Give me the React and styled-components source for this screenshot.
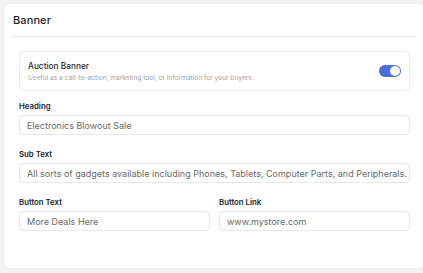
import React from 'react'
import styled, { createGlobalStyle } from 'styled-components'

const GlobalStyle = createGlobalStyle`
    html, body {
        margin: 0;
        padding: 0;
        background: #f3f3f3;
        overflow: hidden;
    }
    body {
        font-family: Inter, "Noto Sans", sans-serif;
        color: #222;
    }
`

const Page = styled.div`
    padding: 4px 0 0 4px;
    width: 423px;
    height: 273px;
    box-sizing: border-box;
`

const Card = styled.section`
    width: 421px;
    height: 264px;
    box-sizing: border-box;
    background: #fff;
    border-radius: 6px;
    box-shadow: 0 0 2px rgba(0, 0, 0, 0.04);
`

const CardHeader = styled.header`
    margin: 0 9px;
    height: 32px;
    display: flex;
    align-items: center;
    border-bottom: 1px solid #e8e8e8;
`

const Title = styled.h2`
    margin: 0;
    font-size: 11px;
    font-weight: 500;
    letter-spacing: 0.1px;
    color: #1e1e1e;
`

const Body = styled.div`
    padding: 14px 15px 0 15px;
    display: flex;
    flex-direction: column;
`

const ToggleBox = styled.div`
    height: 40px;
    box-sizing: border-box;
    border: 1px solid #ececec;
    border-radius: 5px;
    display: flex;
    align-items: center;
    justify-content: space-between;
    padding: 0 8px 0 8px;
`

const ToggleText = styled.div`
    display: flex;
    flex-direction: column;
    gap: 3px;
`

const ToggleTitle = styled.span`
    font-size: 8.3px;
    font-weight: 500;
    color: #2a2a2a;
`

const ToggleHint = styled.span`
    font-size: 6.6px;
    color: #a4a4a4;
`

const Switch = styled.div`
    width: 22px;
    height: 12px;
    border-radius: 6px;
    background: ${props => (props.on ? '#4c6ddc' : '#ccc')};
    display: flex;
    align-items: center;
    justify-content: ${props => (props.on ? 'flex-end' : 'flex-start')};
    padding: 0 1px;
    box-sizing: border-box;

    &::after {
        content: '';
        width: 10px;
        height: 10px;
        border-radius: 50%;
        background: #fff;
    }
`

const Row = styled.div`
    display: grid;
    grid-template-columns: 1fr 1fr;
    gap: 9px;
`

const Field = styled.div`
    display: flex;
    flex-direction: column;
    gap: 3px;
    margin-top: ${props => props.top}px;
`

const Label = styled.label`
    font-size: 7.8px;
    font-weight: 600;
    color: #252525;
    height: 12px;
    line-height: 12px;
`

const Input = styled.div`
    height: 20px;
    box-sizing: border-box;
    border: 1px solid #e9e9e9;
    border-radius: 4px;
    padding: 0 7px;
    display: flex;
    align-items: center;
    font-size: 9px;
    color: #6a6a6a;
    white-space: nowrap;
    overflow: hidden;
`

const App = () => (
    <Page>
        <GlobalStyle />
        <Card>
            <CardHeader>
                <Title>Banner</Title>
            </CardHeader>
            <Body>
                <ToggleBox>
                    <ToggleText>
                        <ToggleTitle>Auction Banner</ToggleTitle>
                        <ToggleHint>
                            Useful as a call-to-action, marketing tool, or information for your buyers.
                        </ToggleHint>
                    </ToggleText>
                    <Switch on />
                </ToggleBox>
                <Field top={9}>
                    <Label>Heading</Label>
                    <Input>Electronics Blowout Sale</Input>
                </Field>
                <Field top={13}>
                    <Label>Sub Text</Label>
                    <Input>
                        All sorts of gadgets available including Phones, Tablets, Computer Parts, and Peripherals.
                    </Input>
                </Field>
                <Row>
                    <Field top={13}>
                        <Label>Button Text</Label>
                        <Input>More Deals Here</Input>
                    </Field>
                    <Field top={13}>
                        <Label>Button Link</Label>
                        <Input>www.mystore.com</Input>
                    </Field>
                </Row>
            </Body>
        </Card>
    </Page>
)

export default App
